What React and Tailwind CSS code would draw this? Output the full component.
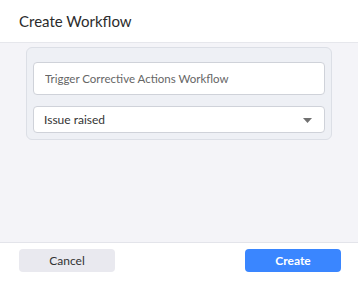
export default function App() {
  return (
    <div
      className="flex h-[283px] w-[358px] flex-col overflow-hidden bg-white text-[#2b2b2b]"
      style={{ fontFamily: 'Lato, "Liberation Sans", sans-serif' }}
    >
      <header className="flex h-[43px] shrink-0 items-center border-b border-[#e6e7ec] px-[19px]">
        <h1 className="text-[15px] leading-none text-[#2b2b2b]">Create Workflow</h1>
      </header>

      <main className="flex-1 bg-[#f4f4f8] px-[26px] pt-[4px]">
        <div className="flex h-[93px] flex-col gap-[11px] rounded-[6px] border border-[#dcdfe6] bg-[#eef0f5] px-[6px] pt-[14px]">
          <input
            type="text"
            defaultValue="Trigger Corrective Actions Workflow"
            className="h-[33px] w-full rounded-[4px] border border-[#cfd2d9] bg-white px-[11px] text-[11.5px] text-[#666] outline-none"
          />
          <div className="flex h-[27px] items-center justify-between rounded-[4px] border border-[#cfd2d9] bg-white pl-[10px] pr-[12px]">
            <span className="text-[12px] text-[#333]">Issue raised</span>
            <svg width="9" height="5" viewBox="0 0 9 5" className="mt-[1px]">
              <path d="M0 0 L9 0 L4.5 5 Z" fill="#707070" />
            </svg>
          </div>
        </div>
      </main>

      <footer className="flex h-[41px] shrink-0 items-start justify-between border-t border-[#e3e4ea] bg-white pl-[19px] pr-[17px] pt-[6px]">
        <button className="h-[23px] w-[96px] rounded-[4px] bg-[#e9e9ef] text-[12px] text-[#333]">
          Cancel
        </button>
        <button className="h-[23px] w-[96px] rounded-[4px] bg-[#3a86ff] text-[12px] font-bold text-white">
          Create
        </button>
      </footer>
    </div>
  )
}
